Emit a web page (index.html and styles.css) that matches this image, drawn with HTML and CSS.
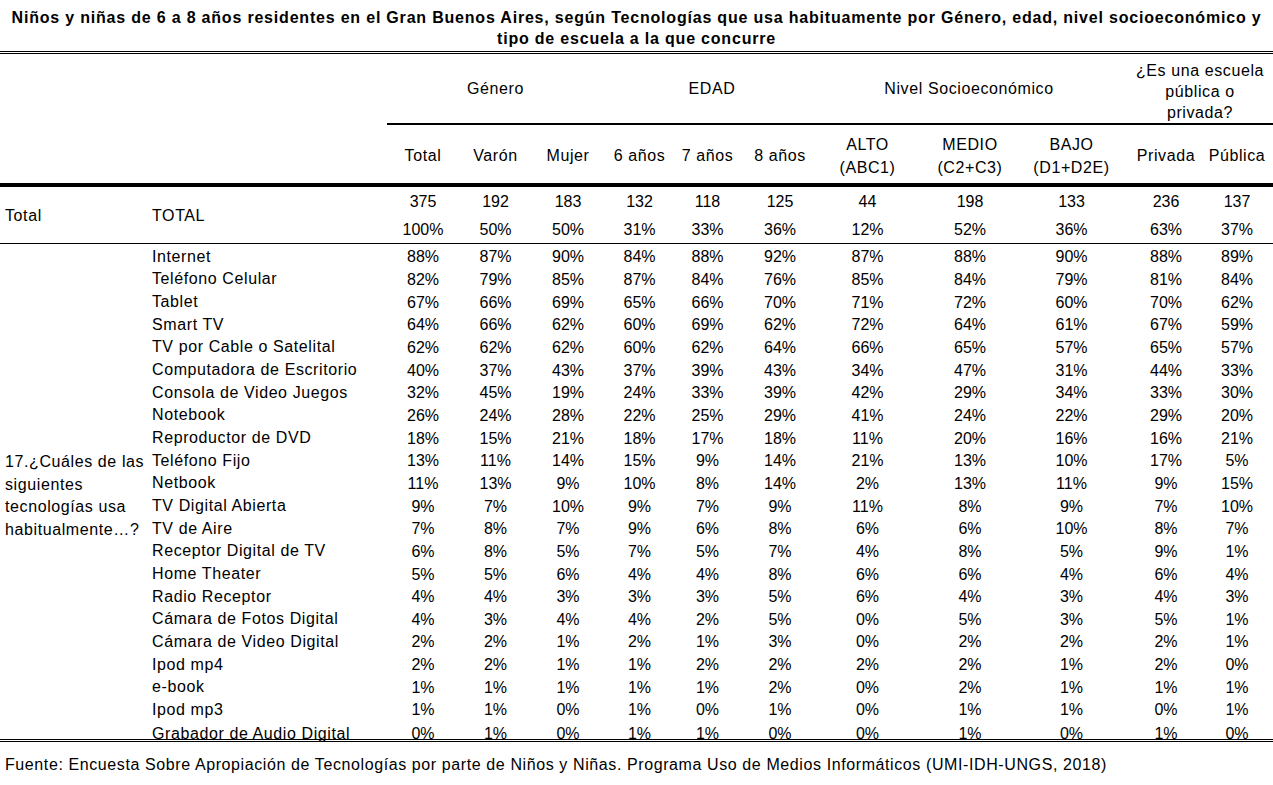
FILE: index.html
```html
<!DOCTYPE html>
<html lang="es">
<head>
<meta charset="utf-8">
<title>Tecnologías que usa habitualmente</title>
<link rel="stylesheet" href="styles.css">
</head>
<body>
<h1 class="title">Niños y niñas de 6 a 8 años residentes en el Gran Buenos Aires, según Tecnologías que usa habituamente por Género, edad, nivel socioeconómico y<br>tipo de escuela a la que concurre</h1>
<div class="table">
  <div class="row">
    <div class="blank"></div>
    <div class="c grp g3">Género</div>
    <div class="c grp g3">EDAD</div>
    <div class="c grp g3">Nivel Socioeconómico</div>
    <div class="c grp g2 esc">¿Es una escuela<br>pública o<br>privada?</div>
  </div>
  <div class="row">
    <div class="blank hd"></div>
    <div class="c hd">Total</div>
    <div class="c hd">Varón</div>
    <div class="c hd">Mujer</div>
    <div class="c hd">6 años</div>
    <div class="c hd">7 años</div>
    <div class="c hd">8 años</div>
    <div class="c hd two">ALTO<br>(ABC1)</div>
    <div class="c hd two">MEDIO<br>(C2+C3)</div>
    <div class="c hd two">BAJO<br>(D1+D2E)</div>
    <div class="c hd">Privada</div>
    <div class="c hd pub">Pública</div>
  </div>
  <div class="row">
    <div class="l tot">Total</div>
    <div class="l tot lab">TOTAL</div>
    <div class="c v">375</div><div class="c v">192</div><div class="c v">183</div><div class="c v">132</div><div class="c v">118</div><div class="c v">125</div><div class="c v">44</div><div class="c v">198</div><div class="c v">133</div><div class="c v">236</div><div class="c v pub">137</div>
  </div>
  <div class="row">
    <div class="c v pc">100%</div><div class="c v pc">50%</div><div class="c v pc">50%</div><div class="c v pc">31%</div><div class="c v pc">33%</div><div class="c v pc">36%</div><div class="c v pc">12%</div><div class="c v pc">52%</div><div class="c v pc">36%</div><div class="c v pc">63%</div><div class="c v pc pub">37%</div>
  </div>
  <div class="row dr">
    <div class="l q">17.¿Cuáles de las<br>siguientes<br>tecnologías usa<br>habitualmente…?</div>
    <div class="l lab">Internet</div>
    <div class="c v">88%</div><div class="c v">87%</div><div class="c v">90%</div><div class="c v">84%</div><div class="c v">88%</div><div class="c v">92%</div><div class="c v">87%</div><div class="c v">88%</div><div class="c v">90%</div><div class="c v">88%</div><div class="c v pub">89%</div>
  </div>
  <div class="row dr">
    <div class="l lab">Teléfono Celular</div>
    <div class="c v">82%</div><div class="c v">79%</div><div class="c v">85%</div><div class="c v">87%</div><div class="c v">84%</div><div class="c v">76%</div><div class="c v">85%</div><div class="c v">84%</div><div class="c v">79%</div><div class="c v">81%</div><div class="c v pub">84%</div>
  </div>
  <div class="row dr">
    <div class="l lab">Tablet</div>
    <div class="c v">67%</div><div class="c v">66%</div><div class="c v">69%</div><div class="c v">65%</div><div class="c v">66%</div><div class="c v">70%</div><div class="c v">71%</div><div class="c v">72%</div><div class="c v">60%</div><div class="c v">70%</div><div class="c v pub">62%</div>
  </div>
  <div class="row dr">
    <div class="l lab">Smart TV</div>
    <div class="c v">64%</div><div class="c v">66%</div><div class="c v">62%</div><div class="c v">60%</div><div class="c v">69%</div><div class="c v">62%</div><div class="c v">72%</div><div class="c v">64%</div><div class="c v">61%</div><div class="c v">67%</div><div class="c v pub">59%</div>
  </div>
  <div class="row dr">
    <div class="l lab">TV por Cable o Satelital</div>
    <div class="c v">62%</div><div class="c v">62%</div><div class="c v">62%</div><div class="c v">60%</div><div class="c v">62%</div><div class="c v">64%</div><div class="c v">66%</div><div class="c v">65%</div><div class="c v">57%</div><div class="c v">65%</div><div class="c v pub">57%</div>
  </div>
  <div class="row dr">
    <div class="l lab">Computadora de Escritorio</div>
    <div class="c v">40%</div><div class="c v">37%</div><div class="c v">43%</div><div class="c v">37%</div><div class="c v">39%</div><div class="c v">43%</div><div class="c v">34%</div><div class="c v">47%</div><div class="c v">31%</div><div class="c v">44%</div><div class="c v pub">33%</div>
  </div>
  <div class="row dr">
    <div class="l lab">Consola de Video Juegos</div>
    <div class="c v">32%</div><div class="c v">45%</div><div class="c v">19%</div><div class="c v">24%</div><div class="c v">33%</div><div class="c v">39%</div><div class="c v">42%</div><div class="c v">29%</div><div class="c v">34%</div><div class="c v">33%</div><div class="c v pub">30%</div>
  </div>
  <div class="row dr">
    <div class="l lab">Notebook</div>
    <div class="c v">26%</div><div class="c v">24%</div><div class="c v">28%</div><div class="c v">22%</div><div class="c v">25%</div><div class="c v">29%</div><div class="c v">41%</div><div class="c v">24%</div><div class="c v">22%</div><div class="c v">29%</div><div class="c v pub">20%</div>
  </div>
  <div class="row dr">
    <div class="l lab">Reproductor de DVD</div>
    <div class="c v">18%</div><div class="c v">15%</div><div class="c v">21%</div><div class="c v">18%</div><div class="c v">17%</div><div class="c v">18%</div><div class="c v">11%</div><div class="c v">20%</div><div class="c v">16%</div><div class="c v">16%</div><div class="c v pub">21%</div>
  </div>
  <div class="row dr">
    <div class="l lab">Teléfono Fijo</div>
    <div class="c v">13%</div><div class="c v">11%</div><div class="c v">14%</div><div class="c v">15%</div><div class="c v">9%</div><div class="c v">14%</div><div class="c v">21%</div><div class="c v">13%</div><div class="c v">10%</div><div class="c v">17%</div><div class="c v pub">5%</div>
  </div>
  <div class="row dr">
    <div class="l lab">Netbook</div>
    <div class="c v">11%</div><div class="c v">13%</div><div class="c v">9%</div><div class="c v">10%</div><div class="c v">8%</div><div class="c v">14%</div><div class="c v">2%</div><div class="c v">13%</div><div class="c v">11%</div><div class="c v">9%</div><div class="c v pub">15%</div>
  </div>
  <div class="row dr">
    <div class="l lab">TV Digital Abierta</div>
    <div class="c v">9%</div><div class="c v">7%</div><div class="c v">10%</div><div class="c v">9%</div><div class="c v">7%</div><div class="c v">9%</div><div class="c v">11%</div><div class="c v">8%</div><div class="c v">9%</div><div class="c v">7%</div><div class="c v pub">10%</div>
  </div>
  <div class="row dr">
    <div class="l lab">TV de Aire</div>
    <div class="c v">7%</div><div class="c v">8%</div><div class="c v">7%</div><div class="c v">9%</div><div class="c v">6%</div><div class="c v">8%</div><div class="c v">6%</div><div class="c v">6%</div><div class="c v">10%</div><div class="c v">8%</div><div class="c v pub">7%</div>
  </div>
  <div class="row dr">
    <div class="l lab">Receptor Digital de TV</div>
    <div class="c v">6%</div><div class="c v">8%</div><div class="c v">5%</div><div class="c v">7%</div><div class="c v">5%</div><div class="c v">7%</div><div class="c v">4%</div><div class="c v">8%</div><div class="c v">5%</div><div class="c v">9%</div><div class="c v pub">1%</div>
  </div>
  <div class="row dr">
    <div class="l lab">Home Theater</div>
    <div class="c v">5%</div><div class="c v">5%</div><div class="c v">6%</div><div class="c v">4%</div><div class="c v">4%</div><div class="c v">8%</div><div class="c v">6%</div><div class="c v">6%</div><div class="c v">4%</div><div class="c v">6%</div><div class="c v pub">4%</div>
  </div>
  <div class="row dr">
    <div class="l lab">Radio Receptor</div>
    <div class="c v">4%</div><div class="c v">4%</div><div class="c v">3%</div><div class="c v">3%</div><div class="c v">3%</div><div class="c v">5%</div><div class="c v">6%</div><div class="c v">4%</div><div class="c v">3%</div><div class="c v">4%</div><div class="c v pub">3%</div>
  </div>
  <div class="row dr">
    <div class="l lab">Cámara de Fotos Digital</div>
    <div class="c v">4%</div><div class="c v">3%</div><div class="c v">4%</div><div class="c v">4%</div><div class="c v">2%</div><div class="c v">5%</div><div class="c v">0%</div><div class="c v">5%</div><div class="c v">3%</div><div class="c v">5%</div><div class="c v pub">1%</div>
  </div>
  <div class="row dr">
    <div class="l lab">Cámara de Video Digital</div>
    <div class="c v">2%</div><div class="c v">2%</div><div class="c v">1%</div><div class="c v">2%</div><div class="c v">1%</div><div class="c v">3%</div><div class="c v">0%</div><div class="c v">2%</div><div class="c v">2%</div><div class="c v">2%</div><div class="c v pub">1%</div>
  </div>
  <div class="row dr">
    <div class="l lab">Ipod mp4</div>
    <div class="c v">2%</div><div class="c v">2%</div><div class="c v">1%</div><div class="c v">1%</div><div class="c v">2%</div><div class="c v">2%</div><div class="c v">2%</div><div class="c v">2%</div><div class="c v">1%</div><div class="c v">2%</div><div class="c v pub">0%</div>
  </div>
  <div class="row dr">
    <div class="l lab">e-book</div>
    <div class="c v">1%</div><div class="c v">1%</div><div class="c v">1%</div><div class="c v">1%</div><div class="c v">1%</div><div class="c v">2%</div><div class="c v">0%</div><div class="c v">2%</div><div class="c v">1%</div><div class="c v">1%</div><div class="c v pub">1%</div>
  </div>
  <div class="row dr">
    <div class="l lab">Ipod mp3</div>
    <div class="c v">1%</div><div class="c v">1%</div><div class="c v">0%</div><div class="c v">1%</div><div class="c v">0%</div><div class="c v">1%</div><div class="c v">0%</div><div class="c v">1%</div><div class="c v">1%</div><div class="c v">0%</div><div class="c v pub">1%</div>
  </div>
  <div class="row dr last">
    <div class="l lab">Grabador de Audio Digital</div>
    <div class="c v">0%</div><div class="c v">1%</div><div class="c v">0%</div><div class="c v">1%</div><div class="c v">1%</div><div class="c v">0%</div><div class="c v">0%</div><div class="c v">1%</div><div class="c v">0%</div><div class="c v">1%</div><div class="c v pub">0%</div>
  </div>
</div>
<p class="source">Fuente: Encuesta Sobre Apropiación de Tecnologías por parte de Niños y Niñas. Programa Uso de Medios Informáticos (UMI-IDH-UNGS, 2018)</p>
</body>
</html>
```
FILE: styles.css
```css
* {
  box-sizing: border-box;
  margin: 0;
  padding: 0;
}

html, body {
  background: #ffffff;
}

body {
  width: 1273px;
  color: #000000;
  font-family: "Liberation Sans", Arial, sans-serif;
  font-size: 16px;
  letter-spacing: 0.6px;
}

.title {
  font-size: 16px;
  font-weight: bold;
  letter-spacing: 0.8px;
  text-align: center;
  line-height: 21px;
  padding-top: 7px;
  padding-bottom: 2px;
  white-space: nowrap;
  border-bottom: 3px double #000000;
}

.table {
  display: grid;
  grid-template-columns: 147px 240px 72px 73px 72px 71px 65px 80px 95px 110px 93px 96px 59px;
  grid-template-rows: 71px 62px 28px 29px repeat(21, 22.67px) 22px;
}

.row {
  display: contents;
}

.c {
  display: flex;
  align-items: center;
  justify-content: center;
  text-align: center;
  white-space: nowrap;
  line-height: 21px;
}

.l {
  display: flex;
  align-items: center;
  justify-content: flex-start;
  text-align: left;
  white-space: nowrap;
  padding-left: 5px;
}

.v {
  letter-spacing: 0;
}

.blank {
  grid-column: span 2;
}

.grp {
  border-bottom: 2px solid #000000;
}

.g3 {
  grid-column: span 3;
}

.g2 {
  grid-column: span 2;
}

.esc {
  padding-top: 5px;
  padding-left: 9px;
}

.hd {
  border-bottom: 4px solid #000000;
  padding-top: 3px;
}

.hd.two {
  line-height: 23px;
}

.pub {
  padding-right: 13px;
}

.tot {
  grid-row: span 2;
  border-bottom: 1px solid #000000;
  padding-top: 1px;
}

.pc {
  border-bottom: 1px solid #000000;
}

.dr > .lab,
.dr > .v {
  padding-top: 3px;
}

.q {
  grid-row: span 22;
  line-height: 22.5px;
  padding-top: 10px;
  border-bottom: 3px double #000000;
}

.lab {
  padding-left: 5px;
}

.last > .lab,
.last > .v {
  border-bottom: 3px double #000000;
  padding-top: 9px;
}

.source {
  padding-left: 5px;
  margin-top: 12px;
  line-height: 22px;
  white-space: nowrap;
}
```
